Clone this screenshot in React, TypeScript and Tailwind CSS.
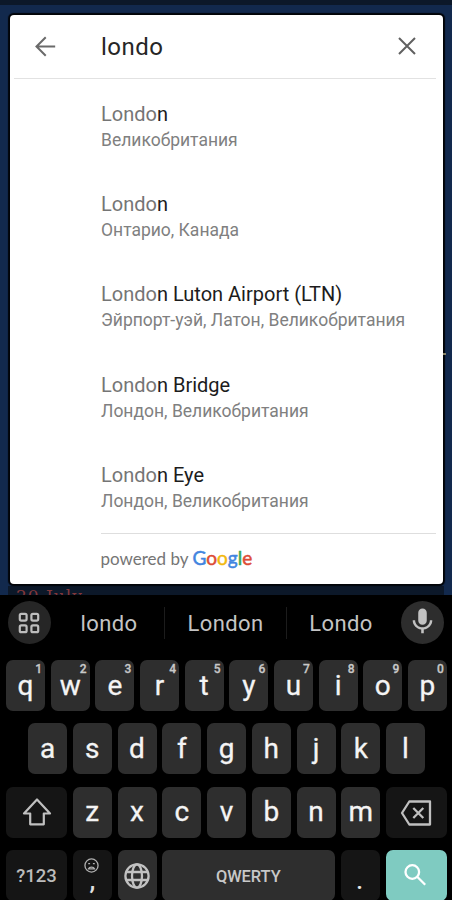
type Place = {
  match: string;
  rest: string;
  address: string;
};

const places: Place[] = [
  { match: "Londo", rest: "n", address: "Великобритания" },
  { match: "Londo", rest: "n", address: "Онтарио, Канада" },
  {
    match: "Londo",
    rest: "n Luton Airport (LTN)",
    address: "Эйрпорт-уэй, Латон, Великобритания",
  },
  { match: "Londo", rest: "n Bridge", address: "Лондон, Великобритания" },
  { match: "Londo", rest: "n Eye", address: "Лондон, Великобритания" },
];

function SearchCard() {
  return (
    <div className="relative mx-auto flex h-[569px] w-[433px] flex-col rounded-[4px] bg-white shadow-[0_0_1px_1.5px_#020408]">
      <div className="mr-[7px] ml-1 flex h-[64px] items-center border-b-[1.500px] border-[#e2e2e2]">
        <svg viewBox="0 0 24 24" className="mb-px ml-[18px] h-[27px] w-[27px] shrink-0" fill="none" stroke="#6a6a6a" strokeWidth="1.8">
          <path d="M20.600 12H4.200M12.200 3.800L4 12l8.200 8.200" />
        </svg>
        <div className="ml-[42.500px] flex-1 text-[24px] tracking-[0.5px] text-[#262626]">londo</div>
        <svg viewBox="0 0 24 24" className="mr-[17px] mb-[2px] h-[24px] w-[24px] shrink-0" fill="none" stroke="#606060" strokeWidth="2">
          <path d="M4 4l16 16M20 4L4 20" />
        </svg>
      </div>
      <div className="pt-[21.500px] pl-[91.500px]">
        {places.map((place, i) => (
          <div key={i} className="h-[90.4px] whitespace-nowrap">
            <div className="text-[20px] leading-[26px] text-[#1c1c1c]">
              <span className="text-[#757575]">{place.match}</span>
              {place.rest}
            </div>
            <div className="text-[17.5px] leading-[26px] text-[#808080]">{place.address}</div>
          </div>
        ))}
      </div>
      <div className="absolute right-[7px] bottom-0 left-[91px] flex h-[51px] items-center border-t border-[#dedede] pb-[1px]">
        <span className="font-['Lato',sans-serif] text-[17px] text-[#757575]">powered by</span>
        <span className="ml-[4px] font-['Lato',sans-serif] text-[19px] [-webkit-text-stroke:0.5px]">
          <span className="text-[#4285e0]">G</span>
          <span className="text-[#dd4b35]">o</span>
          <span className="text-[#f2b90f]">o</span>
          <span className="text-[#4285e0]">g</span>
          <span className="text-[#3aa757]">l</span>
          <span className="text-[#dd4b35]">e</span>
        </span>
      </div>
    </div>
  );
}

function Suggestions() {
  return (
    <div className="flex h-[55px] items-center px-[8px] text-[22px] tracking-[0.4px] text-[#c4c4c4]">
      <div className="flex h-[43px] w-[43px] items-center justify-center rounded-full bg-[#262626]">
        <svg viewBox="0 0 22 22" className="mr-px h-[22px] w-[22px]" fill="none" stroke="#bdbdbd" strokeWidth="2.200">
          <rect x="1.8" y="1.8" width="6.8" height="6.8" rx="1.5" />
          <rect x="13.4" y="1.8" width="6.8" height="6.8" rx="1.5" />
          <rect x="1.8" y="13.4" width="6.8" height="6.8" rx="1.5" />
          <rect x="13.4" y="13.4" width="6.8" height="6.8" rx="1.5" />
        </svg>
      </div>
      <div className="w-[113px] pt-[2px] pl-[3px] text-center">londo</div>
      <div className="h-[32px] w-px bg-[#1c1c1c]" />
      <div className="w-[121px] pt-[2px] text-center">London</div>
      <div className="h-[32px] w-px bg-[#1c1c1c]" />
      <div className="w-[106px] pt-[2px] pl-[2px] text-center">Londo</div>
      <div className="ml-auto flex h-[43px] w-[43px] items-center justify-center rounded-full bg-[#2d2d2d]">
        <svg viewBox="0 0 24 24" className="mb-[2px] h-[31px] w-[31px]" fill="#c2c2c2">
          <path d="M12 14.5c1.9 0 3.3-1.4 3.3-3.3V5.300c0-1.900-1.400-3.300-3.300-3.300S8.700 3.400 8.700 5.300v5.900c0 1.900 1.400 3.300 3.300 3.300z" />
          <path d="M17.700 11c0 3.200-2.600 5.500-5.700 5.500S6.300 14.200 6.300 11H4.400c0 3.700 2.900 6.700 6.600 7.200V21h2v-2.800c3.700-.5 6.600-3.500 6.600-7.200z" />
        </svg>
      </div>
    </div>
  );
}

function Key({ label, hint }: { label: string; hint?: string }) {
  return (
    <div className="relative flex h-[51px] w-[39px] items-center justify-center rounded-[7px] bg-[#2e2e2e] text-[28px] text-[#f4f4f4] [-webkit-text-stroke:0.3px]">
      {label}
      {hint && (
        <span className="absolute top-[3px] right-[3px] text-[12px] leading-[13px] font-medium text-[#c8c8c8]">{hint}</span>
      )}
    </div>
  );
}

function Keyboard() {
  return (
    <div className="flex-1 bg-black">
      <Suggestions />
      <div className="flex flex-col gap-[12.3px] pt-[10px] pr-[5px] pl-[6px]">
        <div className="flex justify-between">
          {"qwertyuiop".split("").map((c, i) => (
            <Key key={c} label={c} hint={String((i + 1) % 10)} />
          ))}
        </div>
        <div className="flex justify-between pr-[22px] pl-[22px]">
          {"asdfghjkl".split("").map((c) => (
            <Key key={c} label={c} />
          ))}
        </div>
        <div className="flex justify-between">
          <div className="flex w-[61px] items-center justify-center rounded-[7px] bg-[#151515]">
            <svg viewBox="0 0 30 30" className="h-[30px] w-[30px]" fill="none" stroke="#c0c0c0" strokeWidth="2.2" strokeLinejoin="round">
              <path d="M15 2.500L28 16.500h-6.200v10.800H8.200V16.500H2z" />
            </svg>
          </div>
          {"zxcvbnm".split("").map((c) => (
            <Key key={c} label={c} />
          ))}
          <div className="flex w-[61px] items-center justify-center rounded-[7px] bg-[#151515] pt-[2px] pr-[2px]">
            <svg viewBox="0 0 32 28" className="h-[28px] w-[32px]" fill="none" stroke="#c0c0c0" strokeWidth="2.300" strokeLinejoin="round">
              <path d="M9.300 2.500H30v23H9.300L2 14z" />
              <path d="M13.300 9l10 10M23.300 9l-10 10" />
            </svg>
          </div>
        </div>
        <div className="flex justify-between">
          <div className="flex h-[51px] w-[61px] items-center justify-center rounded-[7px] bg-[#151515] pt-[3px] text-[18.5px] font-medium text-[#bcbcbc]">
            ?123
          </div>
          <div className="flex w-[39px] flex-col items-center rounded-[7px] bg-[#151515] pt-[8px]">
            <svg viewBox="0 0 16 16" className="mr-px h-[15px] w-[15px]" fill="none" stroke="#b0b0b0" strokeWidth="1.400">
              <circle cx="8" cy="8" r="7" />
              <path d="M4.500 6h2M9.500 6h2M4.800 11.500c1-2.400 5.400-2.400 6.400 0z" />
            </svg>
            <span className="text-[26px] leading-[14px] font-medium text-[#e0e0e0]">,</span>
          </div>
          <div className="flex w-[39px] items-center justify-center rounded-[7px] bg-[#2e2e2e] pt-px pr-px">
            <svg viewBox="0 0 26 26" className="h-[26px] w-[26px]" fill="none" stroke="#c2c2c2" strokeWidth="2.300">
              <circle cx="13" cy="13" r="11.600" />
              <ellipse cx="13" cy="13" rx="5" ry="11.600" />
              <path d="M2.500 9h21M2.500 17h21" />
            </svg>
          </div>
          <div className="flex w-[173px] items-center justify-center rounded-[7px] bg-[#2e2e2e] pt-[3px] pr-px text-[16.4px] font-medium text-[#c8c8c8]">
            QWERTY
          </div>
          <div className="flex w-[39px] items-center justify-center rounded-[7px] bg-[#151515] pt-[12px] pr-[2px] text-[24px] font-medium text-[#e8e8e8]">
            .
          </div>
          <div className="flex w-[61px] items-center justify-center rounded-[7px] bg-[#7fcbc1] pr-[2px]">
            <svg viewBox="0 0 24 24" className="h-[24px] w-[24px]" fill="none" stroke="#ffffff" strokeWidth="2.300">
              <circle cx="9.300" cy="9" r="6.800" />
              <path d="M14.200 13.800l8 8" />
            </svg>
          </div>
        </div>
      </div>
    </div>
  );
}

export default function App() {
  return (
    <div className="flex h-[900px] w-[452px] flex-col overflow-hidden bg-[#12294d] font-['Roboto',sans-serif]">
      <div className="h-[5px] shrink-0 bg-[#0c1829]" />
      <div className="relative h-[590px] shrink-0 px-[8px] pt-[10px]">
        <SearchCard />
        <div className="mt-[2px] h-[9px] overflow-hidden bg-[#0c1829] pl-[8px] font-['DejaVu_Serif',serif] text-[17px] leading-[20px] tracking-[1px] text-[#83373a]">
          20 July
        </div>
        <div className="absolute top-[348px] right-[6px] h-[2px] w-[3px] bg-[#8a8468]" />
      </div>
      <Keyboard />
    </div>
  );
}
